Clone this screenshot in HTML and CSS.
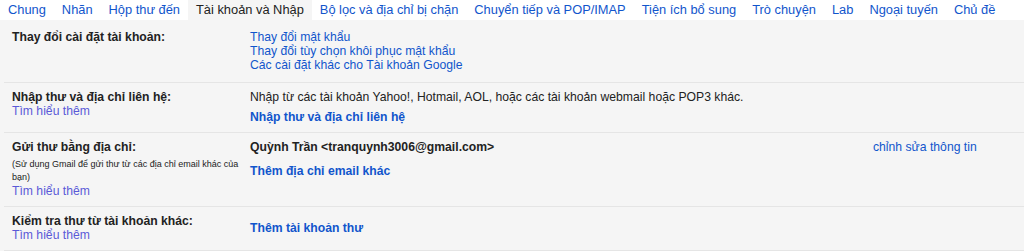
FILE: index.html
```html
<!DOCTYPE html>
<html>
<head>
	<meta charset="utf-8">
	<title>Cài đặt - Tài khoản và Nhập</title>
	<link rel="stylesheet" href="styles.css">
</head>
<body>
<div id="tabs">
	<a class="tab" href="#">Chung</a>
	<a class="tab" href="#">Nhãn</a>
	<a class="tab" href="#">Hộp thư đến</a>
	<span class="tab active">Tài khoản và Nhập</span>
	<a class="tab" href="#">Bộ lọc và địa chỉ bị chặn</a>
	<a class="tab" href="#">Chuyển tiếp và POP/IMAP</a>
	<a class="tab" href="#">Tiện ích bổ sung</a>
	<a class="tab" href="#">Trò chuyện</a>
	<a class="tab" href="#">Lab</a>
	<a class="tab" href="#">Ngoại tuyến</a>
	<a class="tab" href="#">Chủ đề</a>
</div>
<div id="settings">
	<div class="row first">
		<div class="label"><b>Thay đổi cài đặt tài khoản:</b></div>
		<div class="value">
			<a href="#">Thay đổi mật khẩu</a><br/>
			<a href="#">Thay đổi tùy chọn khôi phục mật khẩu</a><br/>
			<a href="#">Các cài đặt khác cho Tài khoản Google</a>
		</div>
	</div>
	<div class="row">
		<div class="label">
			<b>Nhập thư và địa chỉ liên hệ:</b><br/>
			<a class="learn" href="#">Tìm hiểu thêm</a>
		</div>
		<div class="value">
			Nhập từ các tài khoản Yahoo!, Hotmail, AOL, hoặc các tài khoản webmail hoặc POP3 khác.
			<div class="action"><a href="#">Nhập thư và địa chỉ liên hệ</a></div>
		</div>
	</div>
	<div class="row">
		<div class="label">
			<b>Gửi thư bằng địa chỉ:</b><br/>
			<div class="note">(Sử dụng Gmail để gửi thư từ các địa chỉ email khác của<br/>bạn)</div>
			<a class="learn" href="#">Tìm hiểu thêm</a>
		</div>
		<div class="value">
			<b>Quỳnh Trần &lt;tranquynh3006@gmail.com&gt;</b>
			<div class="action wide"><a href="#">Thêm địa chỉ email khác</a></div>
		</div>
		<div class="edit"><a href="#">chỉnh sửa thông tin</a></div>
	</div>
	<div class="row">
		<div class="label">
			<b>Kiểm tra thư từ tài khoản khác:</b><br/>
			<a class="learn" href="#">Tìm hiểu thêm</a>
		</div>
		<div class="value">
			<div class="action lone"><a href="#">Thêm tài khoản thư</a></div>
		</div>
	</div>
</div>
</body>
</html>
```

FILE: styles.css
```css
body {
	margin: 0;
	font-family: "Liberation Sans", Arial, sans-serif;
	font-size: 12.2px;
	color: #222;
	background: #f5f5f5;
}
a {
	color: #15c;
	text-decoration: none;
}
#tabs {
	display: flex;
	height: 20px;
	line-height: 20px;
	font-size: 12.85px;
	background: white;
	white-space: nowrap;
}
.tab {
	padding: 0 8px;
	color: #15c;
}
.tab.active {
	color: #222;
	background: #f5f5f5;
}
#settings {
	margin-left: 4px;
	line-height: 14px;
}
.row {
	display: flex;
	padding: 7px 0 8px 0;
	border-bottom: 1px solid #e5e5e5;
}
.row.first {
	padding-top: 10px;
	padding-bottom: 10px;
}
.label {
	box-sizing: border-box;
	width: 246px;
	padding-left: 8px;
	padding-right: 12px;
}
.value {
	flex: 1;
}
.edit {
	width: 151px;
}
.learn {
	color: #5a5ad8;
}
.note {
	font-size: 9px;
	line-height: 13px;
	margin-top: 4px;
	white-space: nowrap;
}
.action {
	margin-top: 6px;
	font-weight: bold;
}
.action.wide {
	margin-top: 10px;
}
.action.lone {
	margin-top: 7px;
}
```
